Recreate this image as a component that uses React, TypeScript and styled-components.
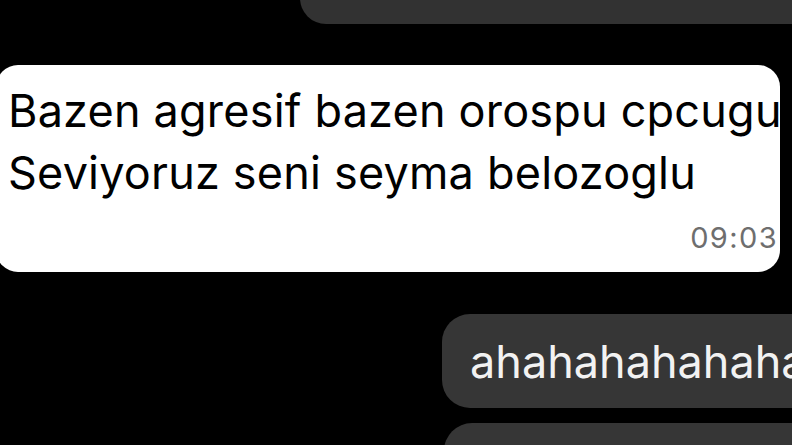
import React from "react";
import styled, { createGlobalStyle } from "styled-components";

const Global = createGlobalStyle`
  html, body { margin: 0; padding: 0; background: #000; }
  body { font-family: Inter, "Noto Sans", "Liberation Sans", sans-serif; }
`;

const Screen = styled.div`
  width: 792px;
  height: 445px;
  overflow: hidden;
  background: #000;
  display: flex;
  flex-direction: column;
  align-items: flex-start;
`;

const DarkBubble = styled.div<{ $left: number; $top: number; $height: number }>`
  flex: none;
  box-sizing: border-box;
  margin-left: ${(p) => p.$left}px;
  margin-top: ${(p) => p.$top}px;
  width: ${(p) => 792 - p.$left + 60}px;
  height: ${(p) => p.$height}px;
  background: #363636;
  border-radius: 28px;
  display: flex;
  align-items: center;
  padding-left: 28px;
  color: #f2f2f2;
  font-size: 45px;
  white-space: nowrap;
`;

const TopBubble = styled(DarkBubble)`
  background: #323232;
  border-radius: 26px;
`;

const WhiteBubble = styled.div`
  flex: none;
  box-sizing: border-box;
  margin-top: 41px;
  margin-left: -4px;
  width: 784px;
  height: 207px;
  background: #fff;
  border-radius: 22px;
  padding: 15px 2px 0 12px;
  display: flex;
  flex-direction: column;
`;

const MessageText = styled.div`
  color: #000;
  font-size: 45px;
  line-height: 62px;
  white-space: nowrap;
  letter-spacing: 0.2px;
`;

const Time = styled.div`
  align-self: flex-end;
  margin-top: 17px;
  color: #6e6e6e;
  font-size: 29px;
  letter-spacing: 1.4px;
  line-height: 34px;
`;

export default function App() {
  return (
    <>
      <Global />
      <Screen>
        <TopBubble $left={300} $top={-56} $height={80} />
        <WhiteBubble>
          <MessageText>Bazen agresif bazen orospu cpcugu</MessageText>
          <MessageText>Seviyoruz seni seyma belozoglu</MessageText>
          <Time>09:03</Time>
        </WhiteBubble>
        <DarkBubble $left={442} $top={42} $height={94}>ahahahahahahaha</DarkBubble>
        <DarkBubble $left={444} $top={15} $height={90} />
      </Screen>
    </>
  );
}
